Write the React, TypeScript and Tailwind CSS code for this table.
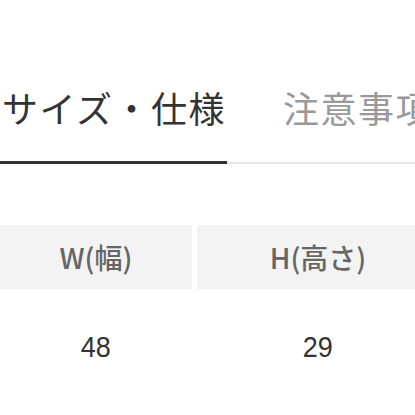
export default function App() {
  const jp = { fontFamily: '"Noto Sans CJK JP", "Noto Sans", sans-serif' };
  return (
    <div className="w-[415px] h-[415px] overflow-hidden bg-white" style={jp}>
      <div className="h-[85px]" />
      <div className="relative flex h-[79px] whitespace-nowrap">
        <div className="w-[227px] shrink-0 pl-[2px] text-[36px] leading-[44px] text-[#333] tracking-[1.5px]">
          サイズ・仕様
        </div>
        <div className="shrink-0 pl-[56px] text-[36px] leading-[44px] text-[#999] tracking-[1.5px]">
          注意事項
        </div>
        <div className="absolute left-0 right-0 top-[77px] h-[2px] bg-[#e6e6e6]" />
        <div className="absolute left-0 top-[76px] w-[227px] h-[3px] bg-[#333]" />
      </div>
      <div className="h-[61px]" />
      <div className="flex gap-[5px] w-[700px]">
        <div className="w-[192px] h-[64px] bg-[#f3f3f3] flex items-center justify-center text-[28px] font-medium text-[#666]">
          W(幅)
        </div>
        <div className="w-[242px] h-[64px] bg-[#f3f3f3] flex items-center justify-center text-[28px] font-medium text-[#666]">
          H(高さ)
        </div>
      </div>
      <div className="flex gap-[5px] w-[700px] pt-[40px]">
        <div className="w-[192px] flex justify-center text-[30px] leading-[36px] text-[#333]" style={{ fontFamily: '"Liberation Sans", Arial, sans-serif' }}>
          <span className="inline-block scale-x-90">48</span>
        </div>
        <div className="w-[242px] flex justify-center text-[30px] leading-[36px] text-[#333]" style={{ fontFamily: '"Liberation Sans", Arial, sans-serif' }}>
          <span className="inline-block scale-x-90">29</span>
        </div>
      </div>
    </div>
  );
}
